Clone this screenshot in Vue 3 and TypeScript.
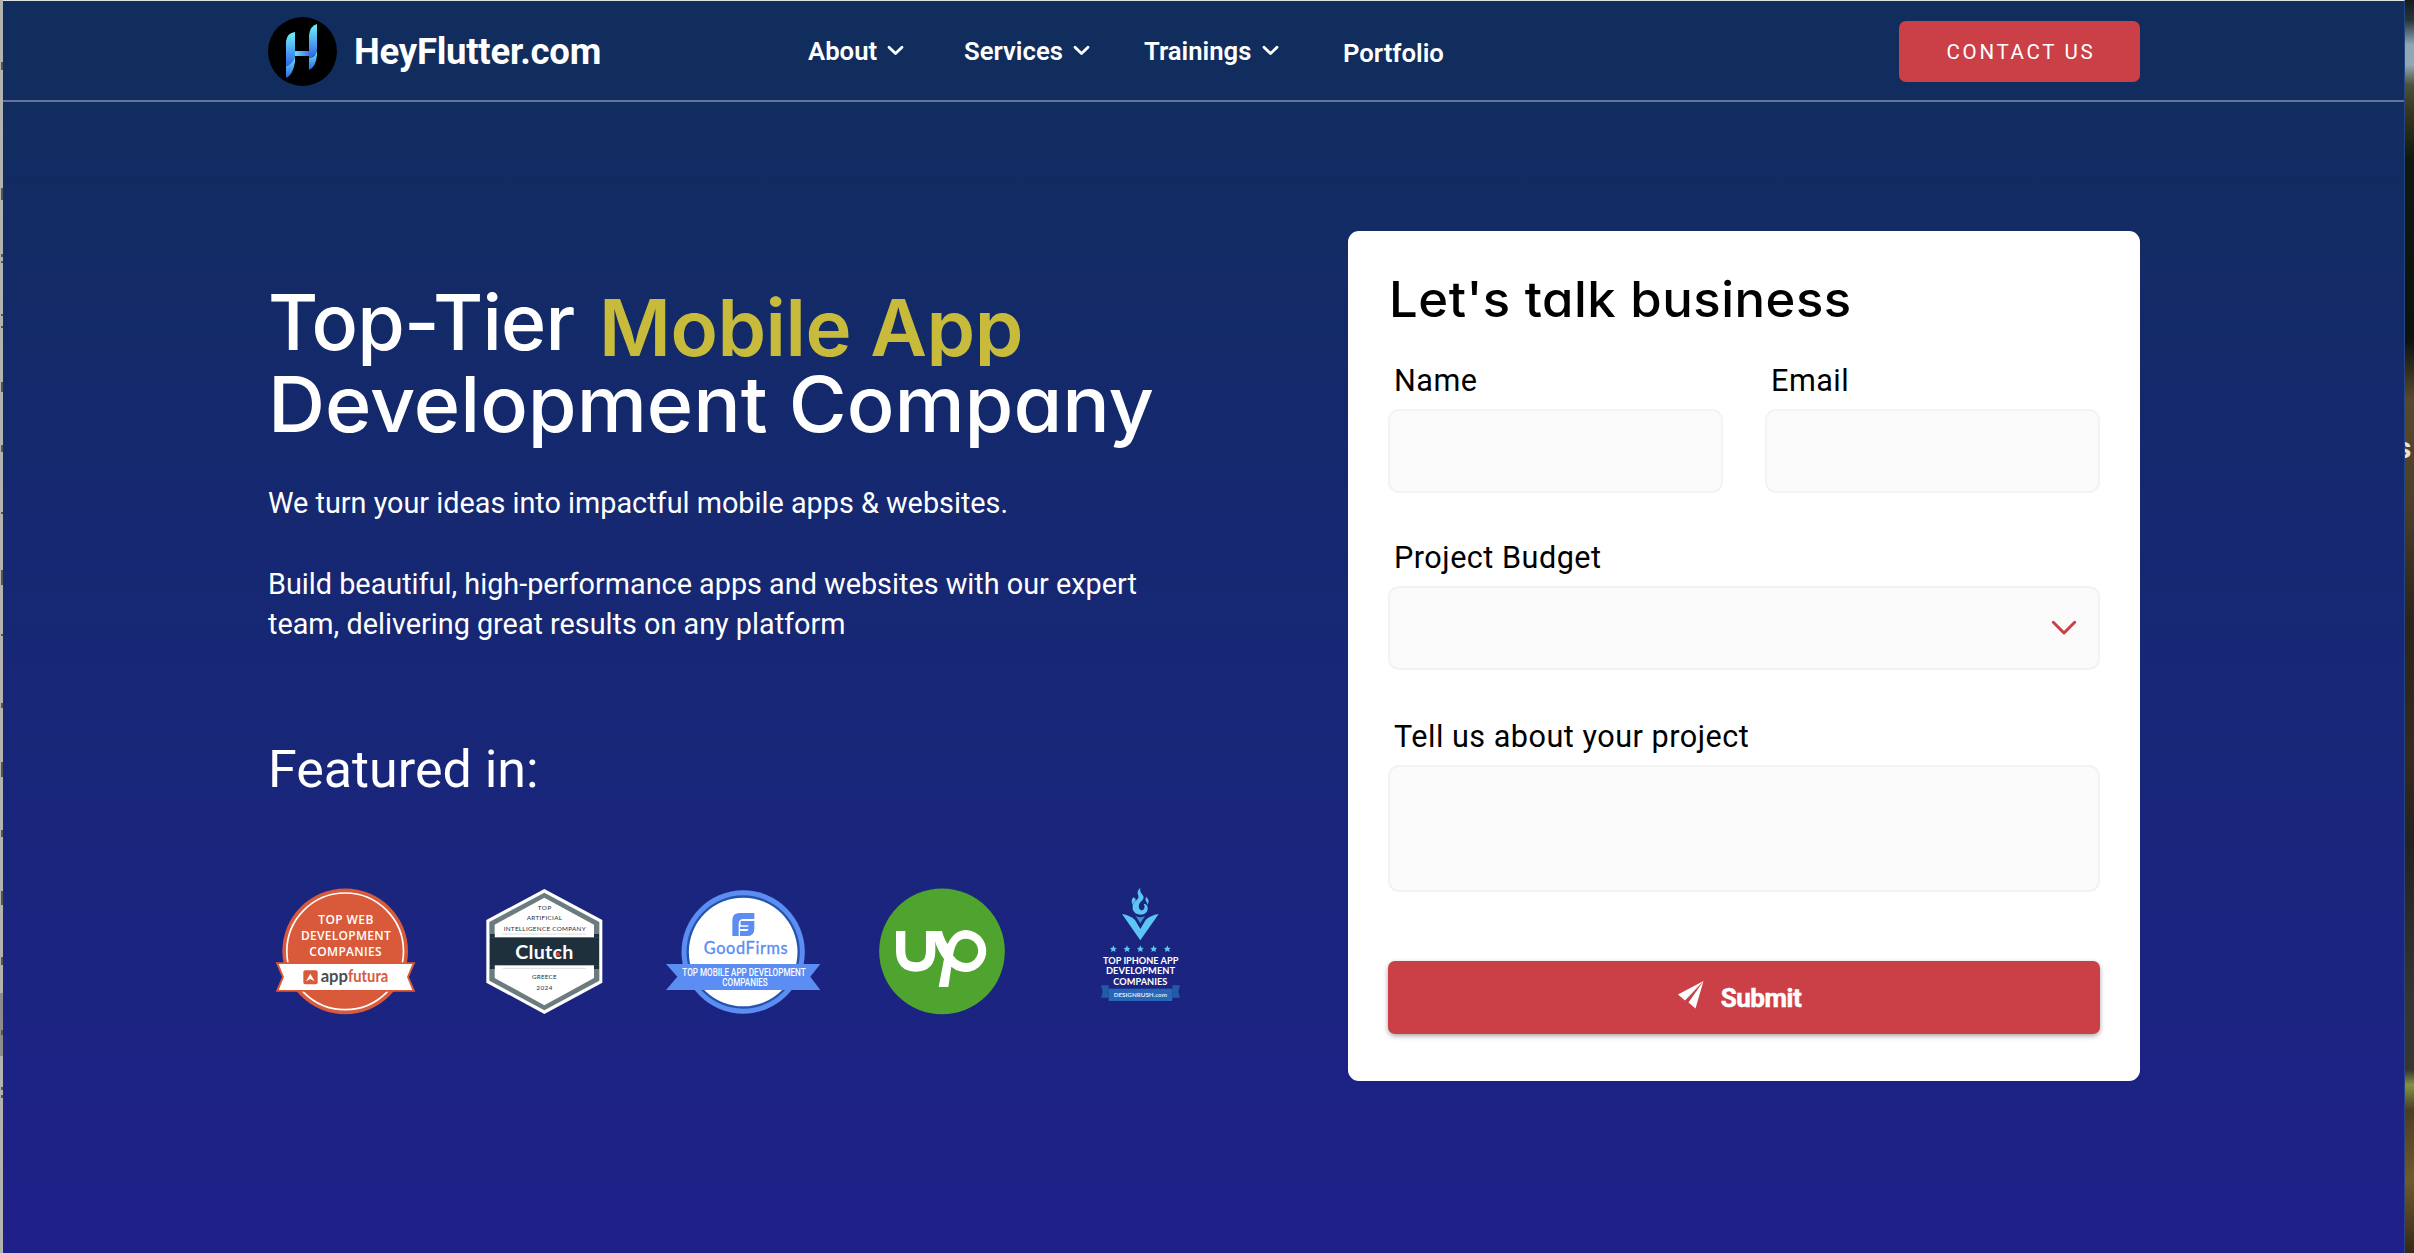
<script setup lang="ts">
interface NavItem {
  label: string
  menu: boolean
  width: number
}

const nav: NavItem[] = [
  { label: 'About', menu: true, width: 96 },
  { label: 'Services', menu: true, width: 126 },
  { label: 'Trainings', menu: true, width: 135 },
  { label: 'Portfolio', menu: false, width: 102 },
]

const stars: number[] = [100, 141, 181, 221, 262]

// [top, height] of the dark glyph slivers along the left edge
const slivers: [number, number][] = [
  [62, 8], [188, 12], [254, 3], [261, 2], [314, 2], [326, 2], [382, 10], [445, 7],
  [512, 2], [570, 15], [634, 2], [703, 5], [762, 15], [830, 7], [891, 14], [957, 8],
  [1030, 5], [1087, 3], [1095, 3],
]
</script>

<template>
  <div class="desktop">
    <div class="edge-left">
      <svg width="3" height="1253" viewBox="0 0 3 1253">
        <rect y="993" width="3" height="63" fill="#8d8d8d" />
        <rect v-for="s in slivers" :key="s[0]" x="1" :y="s[0]" width="2" :height="s[1]" fill="#55584f" />
      </svg>
    </div>

    <main class="page">
      <header class="top">
        <a class="brand">
          <svg width="69" height="69" viewBox="0 0 69 69">
            <defs>
              <linearGradient id="stem" x1="0" y1="0" x2="0" y2="1">
                <stop offset="0" stop-color="#6ff3f6" />
                <stop offset="1" stop-color="#2f62ec" />
              </linearGradient>
              <linearGradient id="bar" x1="0" y1="0" x2="1" y2="0">
                <stop offset="0" stop-color="#62e2f5" />
                <stop offset="1" stop-color="#3a78ee" />
              </linearGradient>
            </defs>
            <circle cx="34.5" cy="34.5" r="34.5" fill="#000" />
            <path d="M18 24Q19 16 27 15V38Q26 48 18 49Z" fill="url(#stem)" />
            <path d="M18 49Q26 47 27 38V45Q25 58 18 61Z" fill="url(#stem)" />
            <path d="M41 18Q42 9 49 7V32Q48 40 41 41Z" fill="url(#stem)" />
            <path d="M41 41Q48 40 49 33V38Q48 50 41 53Z" fill="url(#stem)" />
            <path d="M27 34H41V39H27Z" fill="url(#bar)" />
          </svg>
          <span>HeyFlutter.com</span>
        </a>
        <nav class="nav">
          <a v-for="item in nav" :key="item.label" :class="{ plain: !item.menu }" :style="{ width: item.width + 'px' }">
            <span>{{ item.label }}</span>
            <svg v-if="item.menu" width="17" height="12" viewBox="0 0 17 12">
              <path d="M2 2.2L8.5 8.6L15 2.2" fill="none" stroke="#fff" stroke-width="2.8" stroke-linecap="round" stroke-linejoin="round" />
            </svg>
          </a>
        </nav>
        <button class="contact">CONTACT US</button>
      </header>

      <div class="hero">
        <section class="intro">
          <h1>
            <span class="row">
              <span class="first">Top-Tier</span>
              <span class="accent">Mobile App</span>
            </span>
            <span class="second">Development Company</span>
          </h1>
          <p class="lead">We turn your ideas into impactful mobile apps &amp; websites.</p>
          <p class="body">Build beautiful, high-performance apps and websites with our expert<br>team, delivering great results on any platform</p>
          <h2>Featured in:</h2>

          <div class="badges">
            <!-- AppFutura -->
            <svg width="141" height="128" viewBox="45 51 423 384" font-family="'Open Sans', sans-serif">
              <circle cx="255.500" cy="244" r="188.500" fill="#d85a3a" />
              <circle cx="255.500" cy="244" r="175" fill="none" stroke="#fff" stroke-width="5" />
              <g fill="#fff" font-size="36" font-weight="600">
                <text x="175" y="161" textLength="165">TOP WEB</text>
                <text x="123" y="210" textLength="269">DEVELOPMENT</text>
                <text x="148" y="259" textLength="217">COMPANIES</text>
              </g>
              <path d="M47 277H466L447 321L466 365H47L66 321Z" fill="#d85a3a" />
              <path d="M56 282H457L441 321L457 360H56L72 321Z" fill="#fff" />
              <rect x="130" y="301" width="43" height="42" rx="6" fill="#d85a3a" />
              <path d="M151 311L164 334L151 327L138 334Z" fill="#fff" />
              <text x="182" y="336" font-family="Lato" font-size="50" font-weight="700" fill="#4d4d50" textLength="82" lengthAdjust="spacingAndGlyphs">app</text>
              <text x="264" y="336" font-family="Lato" font-size="50" font-weight="700" fill="#d85a3a" textLength="121" lengthAdjust="spacingAndGlyphs">futura</text>
            </svg>

            <!-- Clutch -->
            <svg width="119" height="128" viewBox="675 51 357 384">
              <path d="M853 57L1027 150V338L853 432L679 338V150Z" fill="#fff" />
              <path d="M853 68L1018 156V332L853 421L688 332V156Z" fill="#6b7b7f" />
              <path d="M853 83L1002 164V324L853 406L704 324V164Z" fill="#fff" />
              <path d="M690 192H704V202H690ZM1002 192H1017V202H1002Z" fill="#1d303c" />
              <rect x="690" y="202" width="327" height="84" fill="#1d303c" />
              <path d="M690 286H704V297H690ZM1002 286H1017V297H1002Z" fill="#1d303c" />
              <path d="M728 192H978M728 295H978" stroke="#c9cdd0" stroke-width="2" />
              <g font-family="Lato" font-size="19" font-weight="400" fill="#1d303c">
                <text x="833" y="119" textLength="41">TOP</text>
                <text x="800" y="151" textLength="106">ARTIFICIAL</text>
                <text x="731" y="182" textLength="246">INTELLIGENCE COMPANY</text>
                <text x="816" y="327" textLength="74">GREECE</text>
                <text x="829" y="359" textLength="48">2024</text>
              </g>
              <text x="766" y="266" font-family="Lato" font-size="59" font-weight="700" fill="#fff" textLength="174">Clutch</text>
              <circle cx="894" cy="253" r="6" fill="#ef4335" />
            </svg>

            <!-- GoodFirms -->
            <svg width="156" height="128" viewBox="45 51 468 384">
              <circle cx="279.500" cy="246" r="185" fill="#5b8df2" />
              <circle cx="279.500" cy="246" r="170" fill="#2454ac" />
              <circle cx="279.500" cy="246" r="163" fill="#fff" />
              <path d="M313 129V147H280Q266 147 266 161V198H247V151Q247 129 269 129Z" fill="#5b8df2" />
              <path d="M272 153H313V176Q313 198 291 198H270V183H290Q295 183 295 177H270V170H295V166H272Z" fill="#5b8df2" />
              <text x="161" y="253" font-family="Lato" font-size="49" font-weight="400" fill="#5b8df2" stroke="#5b8df2" stroke-width="1" textLength="252">GoodFirms</text>
              <path d="M48 282H511L481 320L511 360H48L82 320Z" fill="#5b8df2" />
              <g font-family="Roboto" font-size="30" font-weight="500" fill="#fff">
                <text x="97" y="318" textLength="370" lengthAdjust="spacingAndGlyphs">TOP MOBILE APP DEVELOPMENT</text>
                <text x="217" y="349" textLength="136" lengthAdjust="spacingAndGlyphs">COMPANIES</text>
              </g>
            </svg>

            <!-- Upwork mark -->
            <svg width="128" height="128" viewBox="684 51 384 384">
              <circle cx="876" cy="244" r="188.500" fill="#4fa32f" />
              <path d="M752 183V244Q753 291 797 291Q841 290 842 244V183" fill="none" stroke="#fff" stroke-width="28" />
              <path d="M829 183H876Q882 207 893 222Q913 180 948 180A63 63 0 1 1 904 290L895 351H866L882 267Q862 240 855 213V244H829Z" fill="#fff" />
              <path d="M948 206C925 206 915 222 909 256Q925 279 948 279A36.500 36.500 0 0 0 948 206Z" fill="#4fa32f" />
            </svg>

            <!-- DesignRush -->
            <svg width="81" height="128" viewBox="60 51 243 384">
              <path d="M181 53Q178 64 188 75Q195 84 184 94Q174 103 177 114Q181 124 190 119Q197 112 191 101Q205 102 203 119Q199 133 183 134Q162 134 158 117Q155 101 169 91Q180 82 173 72Q171 61 181 53Z" fill="#5cc5f3" />
              <path d="M160 82Q170 86 166 93Q159 98 158 105Q151 92 160 82ZM198 80Q194 88 200 97Q202 100 201 105Q212 92 198 80Z" fill="#5cc5f3" />
              <path d="M126 132Q151 136 165 150L181 177L197 150Q211 136 236 132L181 211Z" fill="#5cc5f3" />
              <path d="M167 138Q181 146 195 138L181 160Z" fill="#3995cf" />
              <path v-for="x in stars" :key="x" :transform="`translate(${x} 237)`" d="M0-11L3-4L10-3L5 2L7 9L0 5L-7 9L-5 2L-10-3L-3-4Z" fill="#5cc5f3" />
              <g font-family="Lato" font-size="28" font-weight="700" fill="#fff">
                <text x="69" y="281" textLength="226" lengthAdjust="spacingAndGlyphs">TOP IPHONE APP</text>
                <text x="78" y="313" textLength="207" lengthAdjust="spacingAndGlyphs">DEVELOPMENT</text>
                <text x="100" y="345" textLength="162" lengthAdjust="spacingAndGlyphs">COMPANIES</text>
              </g>
              <path d="M63 346H86V383H63L68 365ZM300 346H277V383H300L295 365Z" fill="#225aa6" />
              <rect x="86" y="356" width="191" height="37" fill="#2867b8" />
              <text x="101" y="381" font-family="Lato" font-size="18" font-weight="700" fill="#dbe9fa" textLength="160" lengthAdjust="spacingAndGlyphs">DESIGNRUSH.com</text>
            </svg>
          </div>
        </section>

        <form class="card">
          <h3>Let's talk business</h3>
          <div class="pair">
            <label class="field"><span>Name</span><i class="box short"></i></label>
            <label class="field"><span>Email</span><i class="box short"></i></label>
          </div>
          <label class="field budget">
            <span>Project Budget</span>
            <i class="box select">
              <svg width="26" height="16" viewBox="0 0 26 16">
                <path d="M2.300 2.300L13 13L23.700 2.300" fill="none" stroke="#cb4047" stroke-width="3" stroke-linecap="round" stroke-linejoin="round" />
              </svg>
            </i>
          </label>
          <label class="field about">
            <span>Tell us about your project</span>
            <i class="box tall"></i>
          </label>
          <button type="button" class="submit">
            <svg width="26" height="28" viewBox="0 0 26 28">
              <path d="M25.500 0L0 13.500L7 19.500ZM25.500 0L10.500 21.500L17.500 27.500Z" fill="#fff" />
            </svg>
            <span>Submit</span>
          </button>
        </form>
      </div>
    </main>

    <div class="edge-right"><span>s</span></div>
  </div>
</template>

<style>
body {
  margin: 0;
  overflow: hidden;
}
</style>

<style scoped>
.desktop {
  display: flex;
  width: 2414px;
  height: 1253px;
  overflow: hidden;
  font-family: Roboto, sans-serif;
}
.edge-left {
  width: 3px;
  background: #b3b4b0;
}
.edge-left svg {
  display: block;
}
.edge-right {
  width: 9px;
  overflow: hidden;
  background: linear-gradient(#141d1c 0, #26343a 20px, #8ea6b5 45px, #93a7b4 65px, #4b5238 85px, #37391f 110px, #10180f 160px, #0b130f 340px, #57482c 400px, #4d3e28 500px, #2a241a 620px, #35291c 760px, #242220 840px, #343432 1000px, #38352d 1070px, #849244 1085px, #4c3c22 1110px, #70592c 1180px, #352817 1253px);
}
.edge-right span {
  display: block;
  margin: 431px 0 0 -9px;
  color: #e3e4df;
  font-size: 30px;
  font-weight: 700;
  line-height: 34px;
}
.page {
  box-sizing: border-box;
  width: 2402px;
  height: 1253px;
  border-top: 1px solid #dfe4df;
  border-right: 1px solid #264584;
  background: linear-gradient(#112d5e 0, #112d5f 90px, #152870 500px, #1a257e 900px, #1f2089 1253px);
}
.top {
  display: flex;
  align-items: center;
  box-sizing: border-box;
  height: 101px;
  padding: 2px 264px 0 265px;
  border-bottom: 2px solid #66719c;
}
.brand {
  display: flex;
  align-items: center;
  width: 540px;
  color: #fff;
  font-size: 36.500px;
  font-weight: 700;
  line-height: 42px;
}
.brand span {
  margin-left: 17px;
  letter-spacing: -0.25px;
}
.nav {
  display: flex;
  align-items: flex-start;
  gap: 54px;
  margin-top: 1px;
  color: #fff;
  font-size: 25.700px;
  font-weight: 600;
  line-height: 30px;
}
.nav a {
  display: flex;
  align-items: center;
  justify-content: space-between;
  white-space: nowrap;
}
.nav a:first-child {
  margin-right: 6px;
}
.nav .plain {
  margin: 2px 0 0 10px;
}
.contact {
  width: 241px;
  height: 61px;
  margin-left: auto;
  padding: 0 0 0 3px;
  border: 0;
  border-radius: 7px;
  background: #cb4047;
  color: #fff;
  font-family: Roboto, sans-serif;
  font-size: 20.500px;
  letter-spacing: 2.700px;
}
.hero {
  display: flex;
  justify-content: space-between;
  padding: 129px 264px 0 265px;
}
.intro {
  padding-top: 50px;
  color: #fff;
}
h1, h2, h3, p {
  margin: 0;
  font-weight: 400;
}
h1 {
  font-family: Inter, sans-serif;
  font-feature-settings: "cv11", "ss03";
  font-size: 77px;
  font-weight: 450;
  line-height: 82px;
  white-space: nowrap;
}
.row {
  display: flex;
  align-items: flex-start;
  height: 82px;
}
.first {
  width: 331px;
  letter-spacing: -0.8px;
}
.accent {
  height: 79px;
  margin-top: 6px;
  overflow: hidden;
  color: #c8bb3c;
  font-size: 78px;
  font-weight: 600;
  letter-spacing: -0.5px;
}
.second {
  display: block;
  width: 860px;
  transform: scaleX(1.026);
  transform-origin: 0 0;
}
.lead, .body {
  font-size: 28.800px;
  line-height: 40px;
  white-space: nowrap;
}
.lead {
  margin-top: 38px;
}
.body {
  margin-top: 41px;
}
h2 {
  margin-top: 96px;
  font-size: 52px;
  line-height: 60px;
}
.badges {
  display: flex;
  margin: 87px 0 0 7px;
}
.badges svg + svg {
  margin-left: 69px;
}
.badges svg:nth-child(3) {
  margin-left: 61px;
}
.badges svg:nth-child(4) {
  margin-left: 57px;
}
.badges svg:nth-child(5) {
  margin-left: 94px;
}
.card {
  box-sizing: border-box;
  width: 792px;
  height: 850px;
  padding: 39px 40px 0;
  border-radius: 11px;
  background: #fff;
  color: #000;
}
h3 {
  padding-left: 1px;
  font-family: Inter, sans-serif;
  font-feature-settings: "cv11";
  font-size: 49px;
  font-weight: 500;
  line-height: 60px;
  letter-spacing: 0.5px;
  transform: scaleX(1.037);
  transform-origin: 0 0;
}
.pair {
  display: flex;
  justify-content: space-between;
  margin-top: 33px;
}
.field {
  display: block;
}
.field span {
  display: block;
  padding-left: 6px;
  font-size: 30.600px;
  line-height: 36px;
  letter-spacing: 0.5px;
}
.box {
  display: flex;
  align-items: center;
  justify-content: flex-end;
  box-sizing: border-box;
  margin-top: 10px;
  border: 2px solid #f3f3f3;
  border-radius: 11px;
  background: #fbfbfb;
}
.short {
  width: 335px;
  height: 84px;
}
.budget {
  margin-top: 47px;
}
.select {
  height: 84px;
  padding-right: 21px;
}
.about {
  margin-top: 49px;
}
.tall {
  height: 127px;
}
.submit {
  display: flex;
  align-items: center;
  justify-content: center;
  width: 712px;
  height: 73px;
  margin-top: 69px;
  padding: 0;
  border: 0;
  border-radius: 7px;
  background: #cb4047;
  box-shadow: 0 2px 5px rgba(0, 0, 0, 0.35);
  color: #fff;
  font-family: Roboto, sans-serif;
  font-size: 26px;
  font-weight: 700;
}
.submit svg {
  margin: -5px 17px 0 -9px;
}
.submit span {
  letter-spacing: -0.5px;
  -webkit-text-stroke: 0.5px #fff;
}
</style>
